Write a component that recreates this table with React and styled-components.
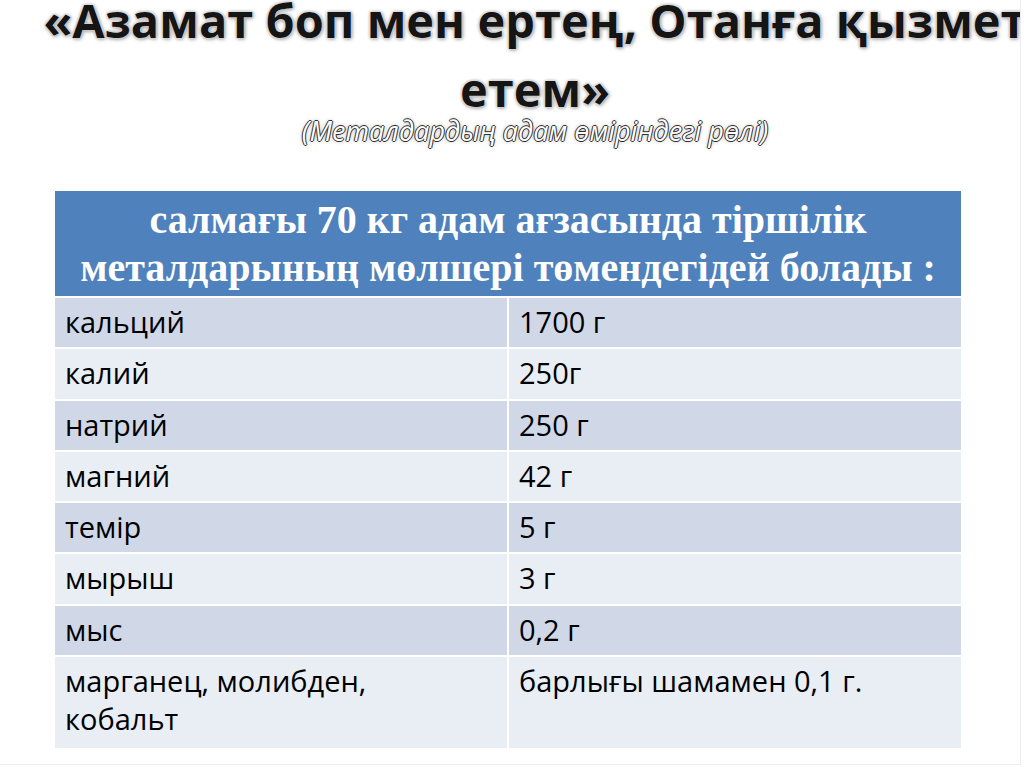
import React from 'react';
import styled, { createGlobalStyle } from 'styled-components';

const GlobalStyle = createGlobalStyle`
  html, body {
    margin: 0;
    padding: 0;
    background: #ffffff;
  }
  body {
    font-family: "Open Sans", "Liberation Sans", sans-serif;
    overflow: hidden;
  }
`;

const rows = [
  ['кальций', '1700 г'],
  ['калий', '250г'],
  ['натрий', '250 г'],
  ['магний', '42 г'],
  ['темір', '5 г'],
  ['мырыш', '3 г'],
  ['мыс', '0,2 г'],
  ['марганец, молибден,\nкобальт', 'барлығы шамамен 0,1 г.'],
];

const App = () => {
  return (
    <>
      <GlobalStyle />
      <Slide>
        <TitleBlock>
          <Title>
            <TitleLine>«Азамат боп мен ертең, Отанға қызмет</TitleLine>
            <TitleLine>етем»</TitleLine>
          </Title>
          <Subtitle>(Металдардың адам өміріндегі рөлі)</Subtitle>
        </TitleBlock>

        <Table>
          <HeaderCell>
            салмағы 70 кг адам ағзасында тіршілік
            <br />
            металдарының мөлшері төмендегідей болады :
          </HeaderCell>
          {rows.map(([name, amount], i) => (
            <React.Fragment key={name}>
              <Cell band={i % 2 === 0} tall={i === rows.length - 1}>{name}</Cell>
              <Cell band={i % 2 === 0} tall={i === rows.length - 1}>{amount}</Cell>
            </React.Fragment>
          ))}
        </Table>
      </Slide>
    </>
  );
};

export default App;

// Styled Components
const Slide = styled.div`
  width: 1020px;
  height: 764px;
  border-right: 1px solid #ededed;
  border-bottom: 1px solid #ededed;
  overflow: hidden;
  box-sizing: content-box;
`;

const TitleBlock = styled.div`
  margin-left: 48px;
  width: 974px;
  padding-top: 2px;
  text-align: center;
`;

const Title = styled.h1`
  margin: 0 -40px;
  display: flex;
  flex-direction: column;
  align-items: center;
  gap: 33px;
  font-family: "Open Sans", "Liberation Sans", sans-serif;
  font-weight: 700;
  font-size: 47px;
  line-height: 36px;
  color: #151515;
  text-shadow:
    0 0 1px #ffffff,
    0 0 2px #ffffff,
    0 0 3px #8a8a8a,
    1px 1px 4px #9a9a9a;
`;

const TitleLine = styled.span`
  display: block;
  white-space: nowrap;
`;

const Subtitle = styled.div`
  margin-top: 14px;
  font-family: "Open Sans", "Liberation Sans", sans-serif;
  font-style: italic;
  font-size: 27px;
  line-height: 20px;
  color: #ffffff;
  text-shadow:
    1px 0 0 #2e2e2e,
    -1px 0 0 #2e2e2e,
    0 1px 0 #2e2e2e,
    0 -1px 0 #2e2e2e,
    0 0 4px #9a9a9a;
`;

const Table = styled.div`
  margin: 50px 0 0 55px;
  width: 906px;
  display: grid;
  grid-template-columns: 452px 452px;
  column-gap: 2px;
  row-gap: 2px;
`;

const HeaderCell = styled.div`
  grid-column: 1 / span 2;
  height: 105px;
  box-sizing: border-box;
  padding: 5px 10px 4px;
  background: #4f81bd;
  color: #ffffff;
  font-family: "Liberation Serif", "Times New Roman", serif;
  font-weight: 700;
  font-size: 40px;
  line-height: 48px;
  text-align: center;
  white-space: nowrap;
`;

const Cell = styled.div`
  box-sizing: border-box;
  height: ${props => (props.tall ? '91px' : '49.3px')};
  padding: 5px 10px 0;
  background: ${props => (props.band ? '#d0d8e8' : '#e9edf4')};
  color: #000000;
  font-family: "Open Sans", "Liberation Sans", sans-serif;
  font-size: 29px;
  line-height: 38px;
  white-space: pre-line;
`;
